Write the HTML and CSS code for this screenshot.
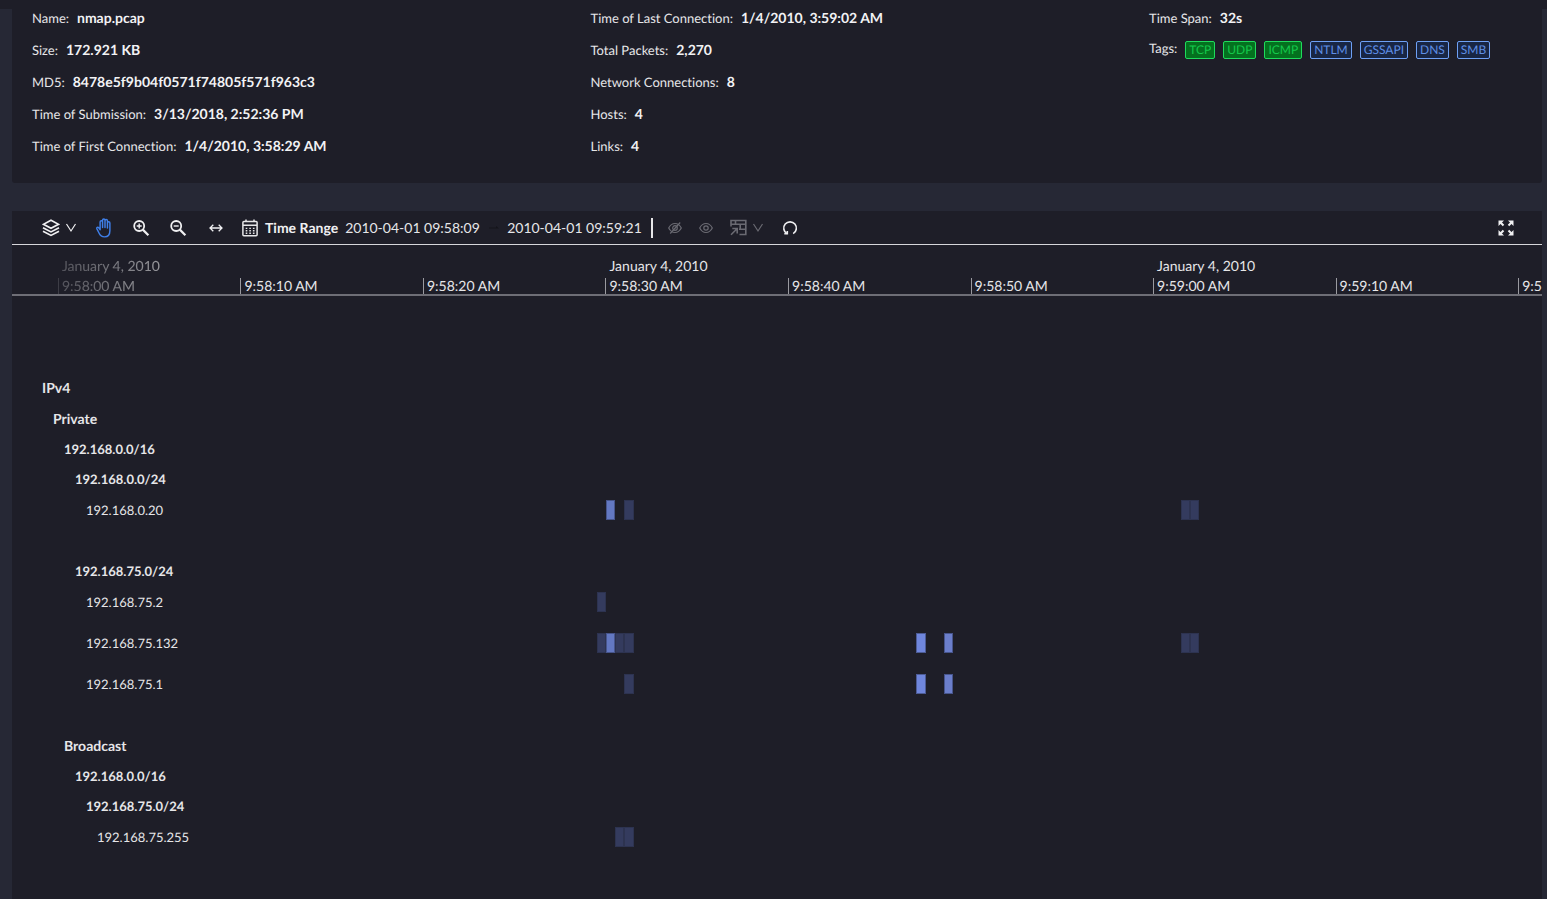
FILE: index.html
```
<!DOCTYPE html>
<html lang="en">
<head>
<meta charset="utf-8">
<title>nmap.pcap</title>
<link rel="stylesheet" href="styles.css">
</head>
<body>
<div class="topbar"></div>
<main class="page">
  <section class="card summary">
    <dl class="facts">
      <div class="fact"><dt>Name:</dt><dd>nmap.pcap</dd></div>
      <div class="fact"><dt>Size:</dt><dd>172.921 KB</dd></div>
      <div class="fact"><dt>MD5:</dt><dd>8478e5f9b04f0571f74805f571f963c3</dd></div>
      <div class="fact"><dt>Time of Submission:</dt><dd>3/13/2018, 2:52:36 PM</dd></div>
      <div class="fact"><dt>Time of First Connection:</dt><dd>1/4/2010, 3:58:29 AM</dd></div>
    </dl>
    <dl class="facts">
      <div class="fact"><dt>Time of Last Connection:</dt><dd>1/4/2010, 3:59:02 AM</dd></div>
      <div class="fact"><dt>Total Packets:</dt><dd>2,270</dd></div>
      <div class="fact"><dt>Network Connections:</dt><dd>8</dd></div>
      <div class="fact"><dt>Hosts:</dt><dd>4</dd></div>
      <div class="fact"><dt>Links:</dt><dd>4</dd></div>
    </dl>
    <dl class="facts">
      <div class="fact"><dt>Time Span:</dt><dd>32s</dd></div>
      <div class="fact"><dt class="tags-label">Tags:</dt><dd class="tags">
        <span class="tag tag-green">TCP</span><span class="tag tag-green">UDP</span><span class="tag tag-green">ICMP</span><span class="tag">NTLM</span><span class="tag">GSSAPI</span><span class="tag">DNS</span><span class="tag">SMB</span>
      </dd></div>
    </dl>
  </section>

  <section class="card timeline">
    <div class="toolbar">
      <button class="tool layers" aria-label="Layers">
        <svg width="18" height="18" viewBox="0 0 18 18" fill="none" stroke="currentColor" stroke-width="1.700"><path d="M9 1.300 16.500 5.300 9 9.300 1.500 5.300Z"/><path d="M1 8.700 9 12.900 17 8.700M1 12.200 9 16.400 17 12.200"/></svg>
        <svg width="12" height="12" viewBox="0 0 12 12" fill="none" stroke="currentColor" stroke-width="1.200"><path d="M1.500 2 6 9 10.500 2"/></svg>
      </button>
      <button class="tool pan" aria-label="Pan">
        <svg width="18" height="20" viewBox="1 0 16 18" fill="none" stroke="currentColor" stroke-width="1.300" stroke-linejoin="round" stroke-linecap="round"><path d="M5.500 10.500V3.500a1.100 1.100 0 0 1 2.200 0V8.500V2a1.100 1.100 0 0 1 2.200 0V8.500V2.500a1.100 1.100 0 0 1 2.200 0V9V4.500a1.100 1.100 0 0 1 2.200 0V11.500c0 3.300-1.800 5.500-4.800 5.500-2.800 0-4-1.300-5-3.500L2.500 9.500c-.4-1 .9-1.700 1.600-.9L5.500 10.500"/></svg>
      </button>
      <button class="tool" aria-label="Zoom in">
        <svg width="18" height="18" viewBox="0 0 18 18" fill="none" stroke="currentColor" stroke-width="1.800"><circle cx="7.200" cy="7" r="5"/><path d="M10.800 10.600 16.400 16.200" stroke-width="2.200"/><path d="M4.700 7H9.700M7.200 4.500V9.500" stroke-width="1.400"/></svg>
      </button>
      <button class="tool" aria-label="Zoom out">
        <svg width="18" height="18" viewBox="0 0 18 18" fill="none" stroke="currentColor" stroke-width="1.800"><circle cx="7.200" cy="7" r="5"/><path d="M10.800 10.600 16.400 16.200" stroke-width="2.200"/><path d="M4.700 7H9.700" stroke-width="1.400"/></svg>
      </button>
      <button class="tool" aria-label="Fit width">
        <svg width="18" height="18" viewBox="0 0 18 18" fill="none" stroke="currentColor" stroke-width="1.300"><path d="M4 9H16M7.300 5.700 4 9l3.300 3.300M12.700 5.700 16 9 12.700 12.300"/></svg>
      </button>
      <div class="range">
        <svg width="16" height="18" viewBox="0 0 16 18" fill="none" stroke="currentColor" stroke-width="1.500"><rect x=".9" y="2.400" width="14.200" height="14.400" rx="1"/><path d="M1 6.300H15M4 .4V3M12 .4V3"/><path d="M3.700 9.400H12.500M3.700 11.800H12.500M3.700 14.200H12.500" stroke-dasharray="1.600 2" stroke-width="1.400"/></svg>
        <label class="range-label" for="from">Time Range</label>
        <input class="date" id="from" type="text" value="2010-04-01 09:58:09">
        <svg class="range-arrow" width="12" height="12" viewBox="0 0 12 12" fill="currentColor"><path d="M1 6.500H11L8 4V5.500H1Z"/></svg>
        <input class="date" type="text" aria-label="Range end" value="2010-04-01 09:59:21">
      </div>
      <span class="divider"></span>
      <button class="tool dim" aria-label="Hide" disabled>
        <svg width="14" height="14" viewBox="0 0 14 14" fill="none" stroke="currentColor" stroke-width="1.200"><path d="M.7 7Q3 2.500 7 2.500T13.300 7Q11 11.500 7 11.500T.7 7Z"/><circle cx="7" cy="7" r="2.300"/><path d="M2.200 12.500 12.200 1.500"/></svg>
      </button>
      <button class="tool dim" aria-label="Show" disabled>
        <svg width="14" height="14" viewBox="0 0 14 14" fill="none" stroke="currentColor" stroke-width="1.200"><path d="M.7 7Q3 2.500 7 2.500T13.300 7Q11 11.500 7 11.500T.7 7Z"/><circle cx="7" cy="7" r="2.200"/></svg>
      </button>
      <button class="tool dim export" aria-label="Open selection" disabled>
        <svg width="17" height="17" viewBox="0 0 17 17" fill="none" stroke="currentColor" stroke-width="1.600"><path d="M1 7.500V1.500H15.800V15.500H9.500M1 5.300H15.800M9 10.200H15.800M10.200 5.300V10.200M5.500 1.500V5.300"/><path d="M1 15.800 6.500 10.300M2.300 9.500H7.200V14.400"/></svg>
        <svg width="12" height="12" viewBox="0 0 12 12" fill="none" stroke="currentColor" stroke-width="1.200"><path d="M1.500 2 6 9 10.500 2"/></svg>
      </button>
      <button class="tool" aria-label="Reset">
        <svg width="16" height="16" viewBox="0 0 16 16" fill="none" stroke="currentColor" stroke-width="1.600"><path d="M4.900 13.600A6.300 6.300 0 1 1 11.200 13.600"/><path d="M2.300 13.700H5.300V10.900"/></svg>
      </button>
      <button class="tool fullscreen" aria-label="Full screen">
        <svg width="16" height="16" viewBox="0 0 16 16" fill="currentColor" stroke="currentColor" stroke-width="2"><path stroke="none" d="M.5.500H6L.5 6ZM15.500.5V6L10 .5ZM.5 15.500V10L6 15.500ZM15.500 15.500H10L15.500 10Z"/><path d="M2 2 5.500 5.500M14 2 10.500 5.500M2 14 5.500 10.500M14 14 10.500 10.500"/></svg>
      </button>
    </div>

    <div class="axis">
      <div class="tick faded"><span>January 4, 2010</span><time>9:58:00 AM</time></div>
      <div class="tick"><time>9:58:10 AM</time></div>
      <div class="tick"><time>9:58:20 AM</time></div>
      <div class="tick"><span>January 4, 2010</span><time>9:58:30 AM</time></div>
      <div class="tick"><time>9:58:40 AM</time></div>
      <div class="tick"><time>9:58:50 AM</time></div>
      <div class="tick"><span>January 4, 2010</span><time>9:59:00 AM</time></div>
      <div class="tick"><time>9:59:10 AM</time></div>
      <div class="tick"><time>9:59:20 AM</time></div>
    </div>

    <div class="lanes">
      <div class="row head level-1"><span class="label">IPv4</span></div>
      <div class="row head level-2"><span class="label">Private</span></div>
      <div class="row net level-3"><span class="label">192.168.0.0/16</span></div>
      <div class="row net level-4"><span class="label">192.168.0.0/24</span></div>
      <div class="row host level-5"><span class="label">192.168.0.20</span>
        <i class="bar mid" style="grid-column:66"></i><i class="bar" style="grid-column:68"></i><i class="bar" style="grid-column:129"></i><i class="bar" style="grid-column:130"></i></div>
      <div class="row net level-4 group"><span class="label">192.168.75.0/24</span></div>
      <div class="row host level-5"><span class="label">192.168.75.2</span>
        <i class="bar" style="grid-column:65"></i></div>
      <div class="row host level-5"><span class="label">192.168.75.132</span>
        <i class="bar" style="grid-column:65"></i><i class="bar mid" style="grid-column:66"></i><i class="bar" style="grid-column:67"></i><i class="bar" style="grid-column:68"></i><i class="bar high" style="grid-column:100"></i><i class="bar strong" style="grid-column:103"></i><i class="bar" style="grid-column:129"></i><i class="bar" style="grid-column:130"></i></div>
      <div class="row host level-5"><span class="label">192.168.75.1</span>
        <i class="bar" style="grid-column:68"></i><i class="bar high" style="grid-column:100"></i><i class="bar strong" style="grid-column:103"></i></div>
      <div class="row head level-3 group"><span class="label">Broadcast</span></div>
      <div class="row net level-4"><span class="label">192.168.0.0/16</span></div>
      <div class="row net level-5"><span class="label">192.168.75.0/24</span></div>
      <div class="row host level-6"><span class="label">192.168.75.255</span>
        <i class="bar" style="grid-column:67"></i><i class="bar" style="grid-column:68"></i></div>
    </div>
  </section>
</main>
</body>
</html>
```
FILE: styles.css
```
* { box-sizing: border-box; }
body {
  margin: 0;
  min-height: 100vh;
  display: flex;
  flex-direction: column;
  background: #262835;
  color: #e6e6e8;
  font: 14px/18px Lato, "Liberation Sans", sans-serif;
  font-variant-ligatures: none;
  text-rendering: geometricPrecision;
}
.topbar { height: 9px; flex: none; background: #1e1e28; }
.page {
  flex: 1;
  display: flex;
  flex-direction: column;
  gap: 28px;
  padding: 0 5px 0 12px;
}
.card { background: #1e1e28; }
.summary {
  display: grid;
  grid-template-columns: 1fr 1fr 373px;
  padding: 0 20px 28px;
  border-radius: 0 0 3px 3px;
}
.facts {
  margin: 0;
  display: flex;
  flex-direction: column;
  gap: 14px;
}
.fact { display: flex; gap: 8px; }
.fact dt { font-size: 13px; }
.fact dd { margin: 0; font-weight: 700; color: #f2f2f4; }
.tags-label { line-height: 14px; }
.fact .tags {
  display: flex;
  flex-wrap: wrap;
  gap: 8px;
  font-weight: 400;
}
.tag {
  height: 18px;
  padding: 0 3px;
  border: 1px solid #6ea0f5;
  border-radius: 2px;
  background: #182644;
  color: #5f8fe6;
  font-size: 12px;
  line-height: 16px;
}
.tag-green { border-color: #1fdb5c; background: #04711f; color: #14c94c; }

.timeline { flex: 1; display: flex; flex-direction: column; }
.toolbar {
  display: flex;
  align-items: center;
  height: 34px;
  padding: 0 28px 0 30px;
  border-bottom: 1px solid #d6d6da;
}
.tool {
  display: flex;
  align-items: center;
  justify-content: center;
  width: 37px;
  padding: 0;
  border: 0;
  background: none;
  color: #f0f0f2;
}
.layers { width: 43px; gap: 5px; justify-content: flex-start; }
.pan { color: #3f7fe8; }
.dim { width: 31px; color: #6a6a72; }
.export { width: 50px; gap: 5px; padding-left: 2px; }
.fullscreen { width: 16px; margin-left: auto; }
.range { display: flex; align-items: center; gap: 7px; padding-left: 9px; }
.range-label { font-weight: 700; color: #f0f0f2; }
.date {
  width: 136px;
  padding: 0;
  border: 0;
  background: none;
  color: inherit;
  font: inherit;
}
.range-arrow { color: #14141a; }
.divider { width: 2px; height: 20px; margin: 0 6px 0 8px; background: #e6e6e8; }

.axis {
  display: flex;
  align-items: flex-end;
  height: 51px;
  padding-left: 3%;
  overflow: hidden;
  border-bottom: 2px solid #6e6e76;
}
.tick {
  flex: 0 0 12.3%;
  display: flex;
  flex-direction: column;
  gap: 4px;
  line-height: 16px;
  padding-left: 4px;
  white-space: nowrap;
  background: linear-gradient(#9a9aa0, #9a9aa0) left bottom / 1px 16px no-repeat;
}
.faded { -webkit-mask-image: linear-gradient(90deg, rgba(0,0,0,.25), rgba(0,0,0,.6) 100px); mask-image: linear-gradient(90deg, rgba(0,0,0,.25), rgba(0,0,0,.6) 100px); }

.lanes { padding: 76px 0 47px 1px; overflow: hidden; }
.row {
  display: grid;
  grid-template-columns: repeat(167, 0.597%);
  grid-template-rows: 100%;
  align-items: center;
  height: 30px;
}
.head, .host { height: 31px; }
.host + .host { margin-top: 10px; }
.row.group { margin-top: 31px; }
.label { grid-area: 1 / 1 / 2 / 60; font-weight: 700; font-size: 13px; }
.head .label { font-size: 14px; }
.host .label { font-weight: 400; }
.level-1 .label { padding-left: 29px; }
.level-2 .label { padding-left: 40px; }
.level-3 .label { padding-left: 51px; }
.level-4 .label { padding-left: 62px; }
.level-5 .label { padding-left: 73px; }
.level-6 .label { padding-left: 84px; }
.bar { grid-row: 1; height: 20px; background: #343b5e; border: 1px solid #2d3350; }
.mid { background: #6378c2; border-color: #47558c; }
.strong { background: #6b7ecb; border-color: #47558c; }
.high { background: #6f86dc; border-color: #4d5c96; }
```
